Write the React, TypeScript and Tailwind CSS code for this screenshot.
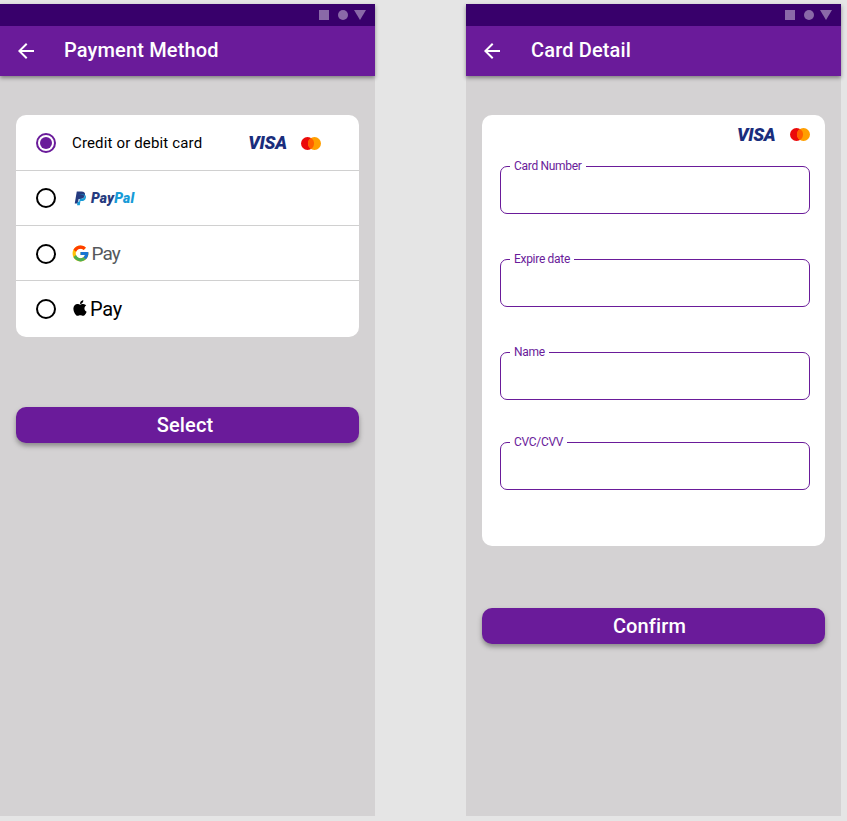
import { FaApple } from "react-icons/fa";
import { FcGoogle } from "react-icons/fc";

/* ───────────────── Brand marks ───────────────── */

function Visa() {
  return (
    <span className="w-[38px] whitespace-nowrap text-[18px] leading-[14px] font-black italic tracking-[-0.3px] text-[#1a2d7c]">
      VISA
    </span>
  );
}

function Mastercard() {
  return (
    <svg width="20" height="13" viewBox="0 0 20 13" aria-hidden="true">
      <circle cx="6.500" cy="6.500" r="6.500" fill="#eb0a0a" />
      <circle cx="13.500" cy="6.500" r="6.500" fill="#ff9f00" />
      <path d="M10 1a6.500 6.500 0 0 1 0 11a6.500 6.500 0 0 1 0-11z" fill="#ff5f00" />
    </svg>
  );
}

function PayPal() {
  return (
    <div className="flex items-center gap-[5px]">
      <svg width="12" height="15" viewBox="0 0 13 15" aria-hidden="true">
        <path d="M3 0h5c3 0 4.400 1.500 3.900 3.900C11.300 6.600 9.400 8 6.800 8H5l-.8 5H.8z" fill="#253b80" />
        <path d="M4.800 3.200h5.500c2.400.3 3 1.800 2.500 3.700-.6 2.300-2.200 3.400-4.500 3.400H7l-.7 4.400H3.300l.6-3.700h1.700l.6-3.200h1.500c2.300 0 3.800-1.200 4-3.200-.8-.9-3-.9-6.900-1.300z" fill="#179bd7" />
      </svg>
      <span className="text-[14px] leading-none font-black italic tracking-[0.1px]">
        <span className="text-[#253b80]">Pay</span>
        <span className="text-[#179bd7]">Pal</span>
      </span>
    </div>
  );
}

function GooglePay() {
  return (
    <div className="flex items-center gap-[2px] -ml-[1.500px]">
      <FcGoogle size={19} className="-mt-px" />
      <span className="text-[19px] leading-none tracking-[-0.9px] text-[#55585c]">Pay</span>
    </div>
  );
}

function ApplePay() {
  return (
    <div className="flex items-center gap-px -ml-px text-black">
      <FaApple size={18} className="-mt-[2px]" />
      <span className="text-[20px] leading-none tracking-[-0.2px]">Pay</span>
    </div>
  );
}

/* ───────────────── Shared chrome ───────────────── */

function Screen({
  title,
  titleClassName,
  children,
}: {
  title: string;
  titleClassName: string;
  children: React.ReactNode;
}) {
  return (
    <div className="w-[375px] h-[812px] shrink-0 bg-[#d4d2d3] flex flex-col">
      <div className="relative z-10 shadow-[0_2px_4px_rgba(0,0,0,0.4)]">
        <div className="h-[22px] bg-[#38006b] flex items-center justify-end gap-[9px] pr-[9px]">
          <span className="w-[10px] h-[10px] bg-[#8a69a8]" />
          <span className="w-[10px] h-[10px] rounded-full bg-[#8a69a8]" />
          <svg width="12" height="10" viewBox="0 0 12 10" className="-ml-[3px]" aria-hidden="true">
            <polygon points="0,0 12,0 6,10" fill="#8a69a8" />
          </svg>
        </div>
        <div className="h-[50px] bg-[#6a1b9a] flex items-center pl-[14px] text-white">
          <svg width="24" height="24" viewBox="0 0 24 24" fill="currentColor" aria-hidden="true">
            <path d="M20 11H7.830l5.590-5.590L12 4l-8 8 8 8 1.410-1.410L7.830 13H20v-2z" />
          </svg>
          <h1 className={`-mt-[2px] text-[20px] leading-none font-medium tracking-[0.15px] ${titleClassName}`}>
            {title}
          </h1>
        </div>
      </div>
      {children}
    </div>
  );
}

function PrimaryButton({ label, className }: { label: string; className: string }) {
  return (
    <button
      className={`mx-4 h-9 rounded-[10px] bg-[#6a1b9a] text-white text-[20px] font-medium tracking-[0.15px] shadow-[0_3px_5px_rgba(0,0,0,0.35)] ${className}`}
    >
      {label}
    </button>
  );
}

function Radio({ selected }: { selected?: boolean }) {
  if (selected) {
    return (
      <span className="w-5 h-5 shrink-0 rounded-full border-2 border-[#6a1b9a] flex items-center justify-center">
        <span className="w-3 h-3 rounded-full bg-[#6a1b9a]" />
      </span>
    );
  }
  return <span className="w-5 h-5 shrink-0 rounded-full border-2 border-black" />;
}

function PaymentRow({
  selected,
  className,
  children,
}: {
  selected?: boolean;
  className: string;
  children: React.ReactNode;
}) {
  return (
    <div className={`flex items-center pl-5 ${className}`}>
      <Radio selected={selected} />
      <div className="ml-[16px] flex-1 flex items-center">{children}</div>
    </div>
  );
}

function OutlinedField({ label, className }: { label: string; className: string }) {
  return (
    <fieldset className={`h-[54px] rounded-[7px] border border-[#6a1b9a] pl-[9px] ${className}`}>
      <legend className="px-1 text-[12px] leading-[12px] tracking-[-0.3px] text-[#6a1b9a]">{label}</legend>
    </fieldset>
  );
}

/* ───────────────── Page ───────────────── */

export default function App() {
  return (
    <div className="w-[847px] h-[821px] overflow-hidden bg-[#e5e5e5] pt-1 flex gap-[91px] font-['Roboto',sans-serif]">
      <Screen title="Payment Method" titleClassName="ml-[26px]">
        <div className="mx-4 mt-[39px] bg-white rounded-[10px] flex flex-col">
          <PaymentRow selected className="h-[56px] pt-px border-b border-[#d0d0d0]">
            <span className="text-[15px] leading-none tracking-[0.15px] text-black">Credit or debit card</span>
            <div className="ml-[46px] flex items-center gap-[15px]">
              <Visa />
              <Mastercard />
            </div>
          </PaymentRow>
          <PaymentRow className="h-[55px] border-b border-[#d0d0d0]">
            <div className="ml-[2px]">
              <PayPal />
            </div>
          </PaymentRow>
          <PaymentRow className="h-[55px] pt-px border-b border-[#d0d0d0]">
            <GooglePay />
          </PaymentRow>
          <PaymentRow className="h-[56px]">
            <ApplePay />
          </PaymentRow>
        </div>
        <PrimaryButton label="Select" className="mt-[70px] pr-[5px]" />
      </Screen>

      <Screen title="Card Detail" titleClassName="ml-[27px]">
        <div className="mx-4 mt-[39px] h-[431px] bg-white rounded-[10px] px-[18px] pt-[13px] pr-[15px] flex flex-col">
          <div className="h-[13px] flex items-center justify-end gap-[15px]">
            <Visa />
            <Mastercard />
          </div>
          <OutlinedField label="Card Number" className="mt-[19px]" />
          <OutlinedField label="Expire date" className="mt-[39px]" />
          <OutlinedField label="Name" className="mt-[39px]" />
          <OutlinedField label="CVC/CVV" className="mt-[36px]" />
        </div>
        <PrimaryButton label="Confirm" className="mt-[62px] pr-[8px]" />
      </Screen>
    </div>
  );
}
